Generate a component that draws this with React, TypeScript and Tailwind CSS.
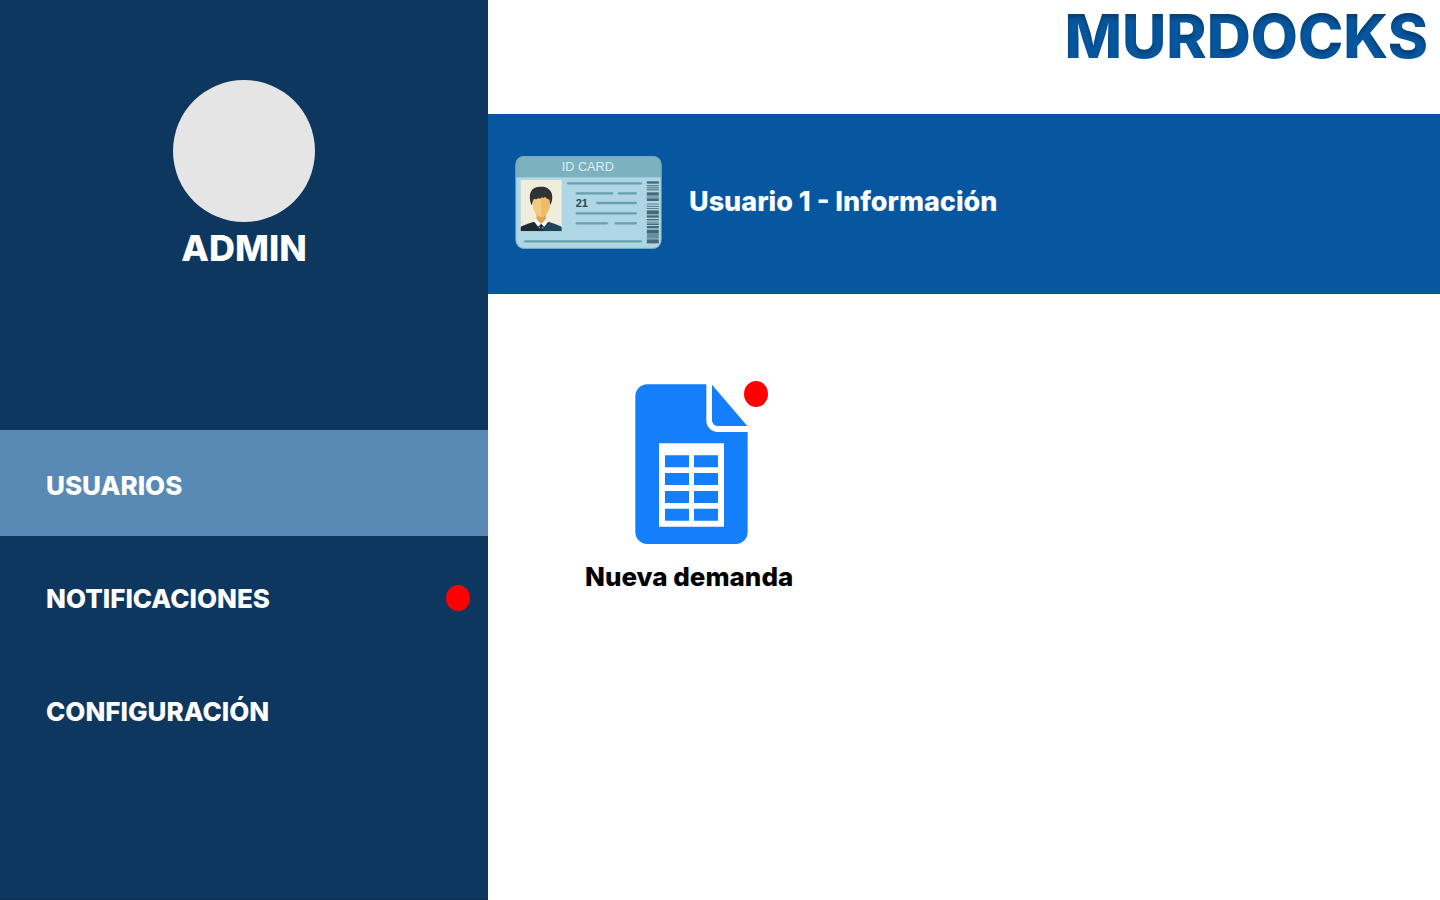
const menu = [
  { label: "USUARIOS", active: true, alert: false },
  { label: "NOTIFICACIONES", active: false, alert: true },
  { label: "CONFIGURACIÓN", active: false, alert: false },
];

// Barcode stripes: [y, height, colour]
const stripes: [number, number, string][] = [
  [102, 7, "#466a75"],
  [113, 4, "#5c8490"],
  [120, 3, "#466a75"],
  [126, 3, "#466a75"],
  [135, 10, "#466a75"],
  [145, 7, "#7ba4b0"],
  [153, 8, "#466a75"],
  [167, 7, "#84abb7"],
  [176, 3, "#5c8490"],
  [182, 3, "#5c8490"],
  [189, 12, "#466a75"],
  [204, 7, "#466a75"],
  [215, 4, "#466a75"],
  [222, 7, "#7ba4b0"],
  [229, 4, "#466a75"],
  [236, 7, "#466a75"],
  [247, 12, "#466a75"],
  [259, 15, "#66909c"],
  [276, 12, "#466a75"],
];

// Printed lines: [x1, x2, y]
const lines: [number, number, number][] = [
  [178, 402, 108],
  [204, 316, 138],
  [330, 387, 138],
  [265, 387, 167],
  [204, 387, 198],
  [204, 300, 228],
  [321, 387, 228],
  [49, 402, 282],
];

function IdCard() {
  return (
    <svg viewBox="22 26 440 279" className="h-[93px] w-[147px] shrink-0" aria-hidden="true">
      <defs>
        <clipPath id="card">
          <rect x="23" y="26" width="438" height="278" rx="26" />
        </clipPath>
        <clipPath id="photo">
          <rect x="38" y="97" width="124" height="155" />
        </clipPath>
      </defs>
      <g clipPath="url(#card)">
        <rect x="22" y="26" width="440" height="279" fill="#afd6e5" />
        <rect x="22" y="26" width="440" height="64" fill="#7cb1c0" />
      </g>
      <rect x="24" y="27" width="436" height="276" rx="25" fill="none" stroke="#6f9fb4" strokeWidth="2" />
      <text x="240" y="72" textAnchor="middle" fontSize="38" fontWeight="400" fill="#dceef3" fontFamily="Liberation Sans, sans-serif">
        ID CARD
      </text>
      <g clipPath="url(#photo)">
        <rect x="38" y="97" width="124" height="155" fill="#f1eddc" />
        <path d="M38 252V240Q40 235 84 222L100 252Z" fill="#202a33" />
        <path d="M162 252V240Q160 235 116 222L100 252Z" fill="#21435c" />
        <path d="M86 194H114V220L100 234L86 220Z" fill="#dda552" />
        <path d="M74 158Q74 146 88 144H112Q126 146 126 158L125 180Q121 200 106 208H94Q79 200 75 180Z" fill="#f6ca7e" />
        <path d="M100 144H112Q126 146 126 158L125 180Q121 200 106 208H100Z" fill="#eebb68" />
        <path d="M84 214L100 230L91 238L78 222Z" fill="#fff" />
        <path d="M116 214L100 230L109 238L122 222Z" fill="#fff" />
        <path d="M91 238L100 229L109 238L103 240L108 252H92L97 240Z" fill="#17324a" />
        <path d="M72 174C65 162 64 143 69 133C74 122 86 117 101 118C117 118 128 126 132 139C135 151 133 163 127 174L125 157Q118 155 112 149L104 153L105 148L94 156L95 151L85 156L78 155Q74 160 72 174Z" fill="#303234" />
      </g>
      {lines.map(([x1, x2, y]) => (
        <path key={`${x1}-${y}`} d={`M${x1 + 3} ${y}H${x2 - 3}`} stroke="#68a0ae" strokeWidth="7" strokeLinecap="round" />
      ))}
      <text x="222" y="179" textAnchor="middle" fontSize="33" fontWeight="700" fill="#27485a" fontFamily="Liberation Sans, sans-serif">
        21
      </text>
      {stripes.map(([y, h, fill]) => (
        <rect key={y} x="417" y={y} width="36" height={h} fill={fill} />
      ))}
    </svg>
  );
}

function SheetIcon() {
  return (
    <svg viewBox="45 42 339 480" className="h-40 w-[113px]" fill="#147efb" aria-hidden="true">
      <path
        fillRule="evenodd"
        d="M82 43H259V151A34 34 0 0 0 293 186H383V486A36 36 0 0 1 347 522H82A36 36 0 0 1 46 486V79A36 36 0 0 1 82 43ZM117 220V470H312V220Z"
      />
      <path d="M276 44L382 168H293A17 17 0 0 1 276 151Z" />
      {[256, 309, 363, 416].map((y) => (
        <path key={y} d={`M135 ${y}h72v36h-72zM222 ${y}h72v36h-72z`} />
      ))}
    </svg>
  );
}

function AlertDot({ className = "" }: { className?: string }) {
  return <span className={`h-[26px] w-6 shrink-0 rounded-[50%] bg-[#ff0000] ${className}`} />;
}

export default function App() {
  return (
    <div className="flex min-h-screen bg-white font-['Inter',sans-serif] font-extrabold text-white">
      <aside className="w-[488px] shrink-0 border-b border-[#0b2f52] bg-[#0e375f] pt-20">
        <div className="flex h-[350px] flex-col items-center">
          <div className="size-[142px] rounded-full bg-[#e5e5e5]" />
          <p className="mt-1.5 text-4xl">ADMIN</p>
        </div>
        <nav className="flex flex-col gap-[7px]">
          {menu.map(({ label, active, alert }) => (
            <a
              key={label}
              href="#"
              aria-current={active ? "page" : undefined}
              className={`flex h-[106px] items-center justify-between pt-1 pr-[18px] pl-[46px] text-[26px] ${active ? "bg-[#598ab5]" : ""}`}
            >
              {label}
              {alert && <AlertDot />}
            </a>
          ))}
        </nav>
      </aside>

      <div className="min-w-0 grow">
        <header className="flex h-[114px] justify-end px-3 pt-1.5">
          <svg className="absolute size-0" aria-hidden="true">
            <filter id="inset-shade" colorInterpolationFilters="sRGB">
              <feComponentTransfer in="SourceAlpha">
                <feFuncA type="table" tableValues="1 0" />
              </feComponentTransfer>
              <feGaussianBlur stdDeviation="2" />
              <feOffset dy="4" result="shade" />
              <feFlood floodColor="#000" floodOpacity="0.28" />
              <feComposite in2="shade" operator="in" />
              <feComposite in2="SourceAlpha" operator="in" result="inner" />
              <feMerge>
                <feMergeNode in="SourceGraphic" />
                <feMergeNode in="inner" />
              </feMerge>
            </filter>
          </svg>
          <p className="h-16 text-[61px] leading-[60px] text-[#0757a0] [filter:url(#inset-shade)]">MURDOCKS</p>
        </header>

        <section className="flex h-[180px] items-center gap-[27px] bg-[#0757a0] px-[27px] pb-[3px]">
          <IdCard />
          <h1 className="text-[27px]">Usuario 1 - Información</h1>
        </section>

        <main className="flex px-[97px] pt-[90px]">
          <a href="#" className="flex flex-col items-center text-[26px] leading-8 text-black">
            <span className="pl-1">
              <span className="relative block">
                <SheetIcon />
                <AlertDot className="absolute -top-[3px] -right-5" />
              </span>
            </span>
            <span className="mt-[17px]">Nueva demanda</span>
          </a>
        </main>
      </div>
    </div>
  );
}
